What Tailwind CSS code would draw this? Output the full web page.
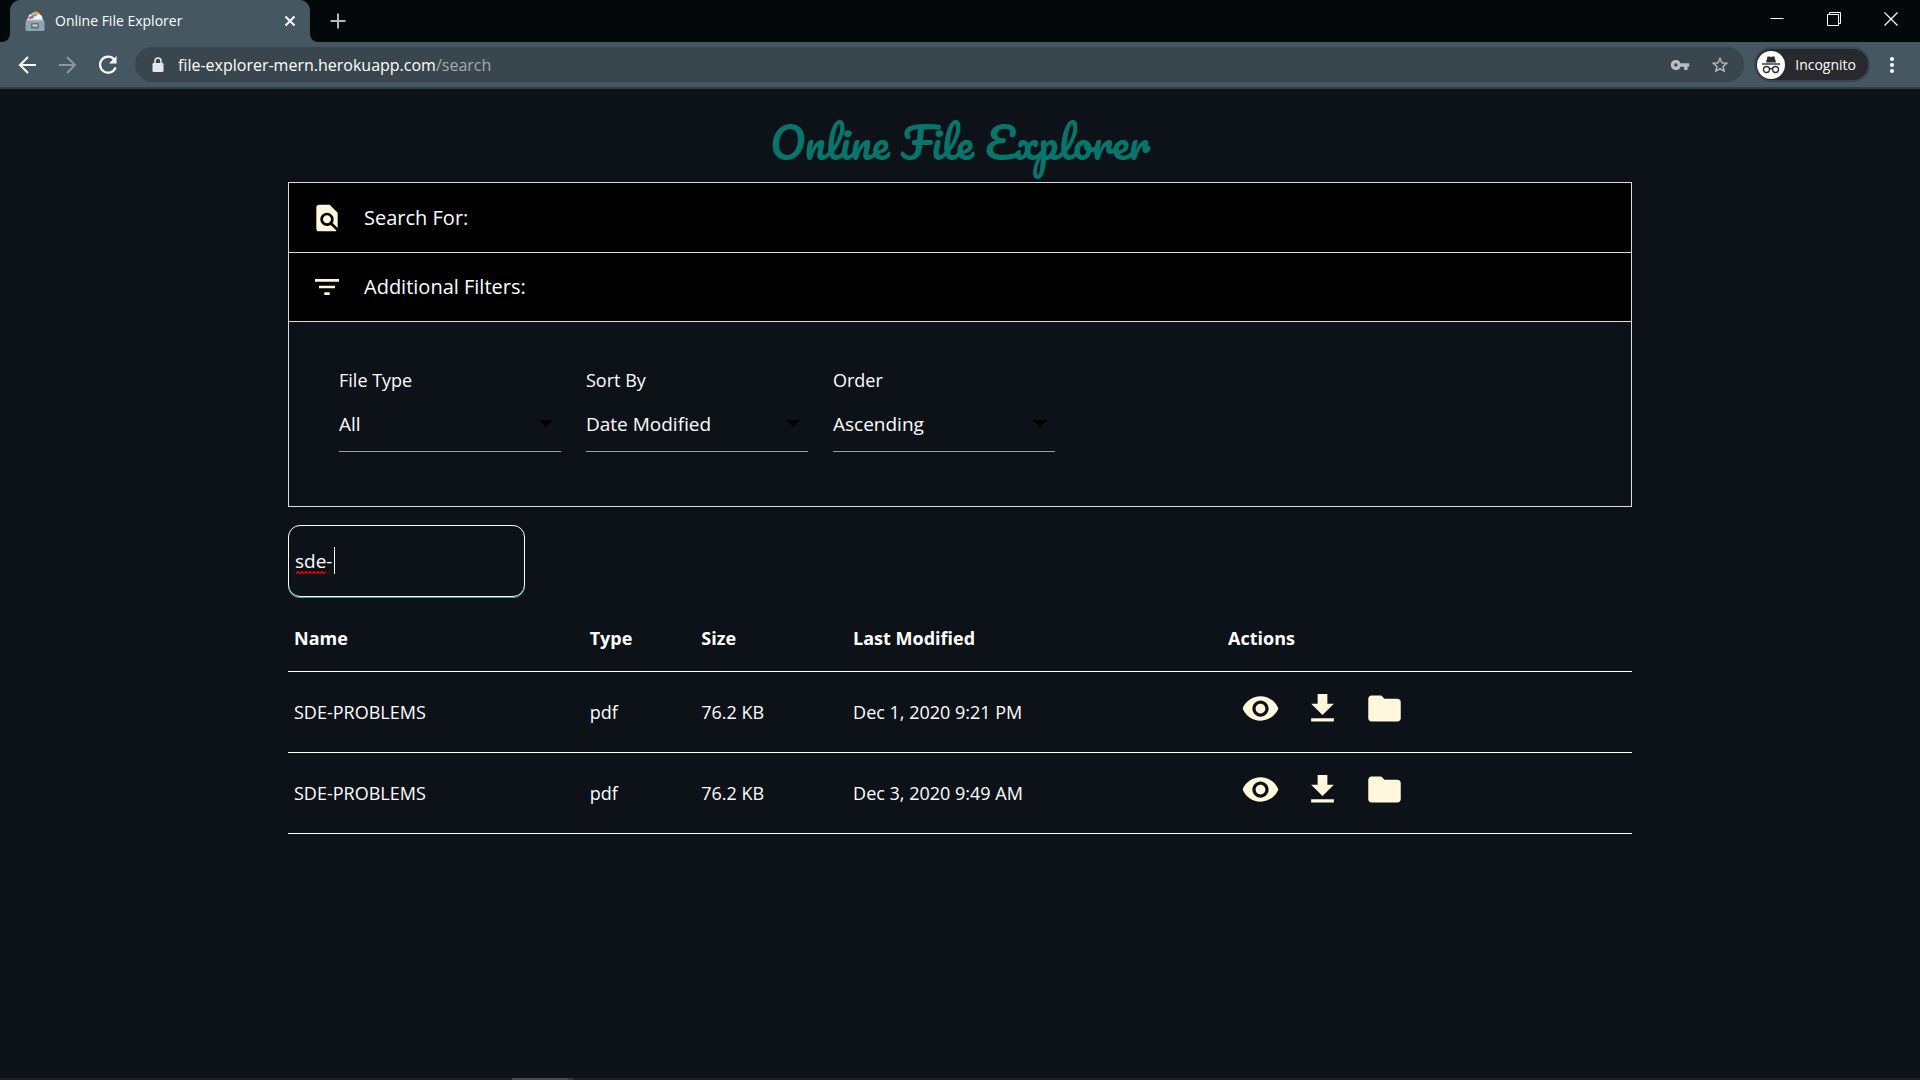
<!DOCTYPE html>
<html lang="en">
<head>
  <meta charset="UTF-8">
  <meta name="viewport" content="width=device-width, initial-scale=1">
  <title>Online File Explorer</title>
  <script src="https://cdn.jsdelivr.net/npm/@tailwindcss/browser@4"></script>
</head>
<body class="bg-[#0d1118] text-white min-h-screen flex flex-col font-['Segoe_UI','Open_Sans',sans-serif]">

  <!-- Tab strip -->
  <header>
    <div class="bg-[#04080a] h-[42px] flex items-center pl-[10px]">
      <div class="relative bg-[#455760] w-[300px] h-full rounded-t-[10px] flex items-center pl-[15px] pr-[14px]">
        <svg class="absolute -left-2 bottom-0 w-2 h-2" viewBox="0 0 8 8"><path fill="#455760" d="M8 0v8H0a8 8 0 0 0 8-8z"/></svg>
        <svg class="absolute -right-2 bottom-0 w-2 h-2" viewBox="0 0 8 8"><path fill="#455760" d="M0 0v8h8a8 8 0 0 1-8-8z"/></svg>
        <svg class="w-5 h-5 mr-[10px] shrink-0" viewBox="0 0 20 20">
          <path fill="#f4f7f9" d="M2 10 4 4l4-2h5l4 3 1 5z"/>
          <path fill="#f9a825" d="m8 1 4-.6 3 2-1 1.400-5-.8z"/>
          <path fill="#42a5f5" d="m6 3.500 5-.5 1 2-5 1z"/>
          <path fill="#e53950" d="m3.500 6 4-1 1.500 2-5 1z"/>
          <path fill="#cfd8dc" d="M2 8h16l1 3H1z"/>
          <rect x="0.500" y="9.500" width="19" height="10.500" rx="1.500" fill="#90a4ae"/>
          <rect x="6" y="12" width="8" height="5.500" rx="1.200" fill="#607580"/>
          <rect x="7.500" y="13.500" width="5" height="2" fill="#cfd8dc"/>
        </svg>
        <span class="text-sm flex-1">Online File Explorer</span>
        <button aria-label="Close tab">
          <svg class="w-3 h-3" viewBox="0 0 12 12" stroke="#fff" stroke-width="2"><path d="m1.500 1.500 9 9m0-9-9 9"/></svg>
        </button>
      </div>
      <button aria-label="New tab" class="ml-5">
        <svg class="w-4 h-4" viewBox="0 0 16 16" stroke="#b4b6b7" stroke-width="2"><path d="M8 .5v15M.5 8h15"/></svg>
      </button>
      <div class="ml-auto flex items-center gap-[43px] pr-[22px] pb-1">
        <button aria-label="Minimize"><svg class="w-[14px] h-[14px]" viewBox="0 0 14 14"><path d="M.5 6.500h13" stroke="#fff"/></svg></button>
        <button aria-label="Restore"><svg class="w-[14px] h-[14px]" viewBox="0 0 14 14" fill="none" stroke="#fff"><path d="M.5 2.500h11v11H.5zM2.500 2.500v-2h11v11h-2"/></svg></button>
        <button aria-label="Close"><svg class="w-[14px] h-[14px]" viewBox="0 0 14 14"><path d="m.5.5 13 13m0-13-13 13" stroke="#fff" stroke-width="1.200"/></svg></button>
      </div>
    </div>

    <!-- Toolbar -->
    <div class="bg-[#455760] h-[47px] border-b-2 border-[#323e44] flex items-center pl-4">
      <div class="flex gap-4 mr-[15px]">
        <button aria-label="Back"><svg class="w-6 h-6" viewBox="0 0 24 24" fill="none" stroke="#fff" stroke-width="2"><path d="M20 12H4.500M12 4l-8 8 8 8"/></svg></button>
        <button aria-label="Forward"><svg class="w-6 h-6" viewBox="0 0 24 24" fill="none" stroke="#8c979c" stroke-width="2"><path d="M3 12h15.500M11 4l8 8-8 8"/></svg></button>
        <button aria-label="Reload"><svg class="w-6 h-6" viewBox="0 0 24 24"><path fill="none" stroke="#fff" stroke-width="2.200" d="M18.200 6.500A8 8 0 1 0 19.600 14.500"/><path fill="#fff" d="M20.500 3v7.500H13z"/></svg></button>
      </div>
      <div class="bg-[#39464d] rounded-full h-[35px] flex-1 flex items-center pl-[17px] pr-[14px]">
        <svg class="w-3 h-4 shrink-0" viewBox="0 0 12 16"><rect x=".5" y="6" width="11" height="9" rx="1.200" fill="#e4e6e7"/><path fill="none" stroke="#e4e6e7" stroke-width="1.600" d="M3 6.500V4a3 3 0 0 1 6 0v2.500"/></svg>
        <span class="ml-[14px] flex-1 text-base">file-explorer-mern.herokuapp.com<span class="text-[#a3abaf]">/search</span></span>
        <svg class="w-5 h-5 mr-5" viewBox="0 0 24 24"><path fill="#bdbdbf" d="M12.650 10A6 6 0 0 0 1 12a6 6 0 0 0 11.650 2H17v4h4v-4h2v-4zM7 14a2 2 0 1 1 0-4 2 2 0 0 1 0 4z"/></svg>
        <svg class="w-5 h-5" viewBox="0 0 24 24"><path fill="#bdbdbf" d="m22 9.240-7.190-.62L12 2 9.190 8.630 2 9.240l5.460 4.730L5.820 21 12 17.270 18.180 21l-1.630-7.030zM12 15.400l-3.760 2.270 1-4.280-3.320-2.880 4.380-.38L12 6.100l1.710 4.040 4.380.38-3.320 2.880 1 4.280z"/></svg>
      </div>
      <button class="ml-[10px] bg-[#27292e] border-2 border-[#39464d] rounded-full h-[35px] flex items-center pl-px pr-3 text-sm">
        <svg class="w-7 h-7 mr-[10px]" viewBox="0 0 28 28">
          <circle cx="14" cy="14" r="14" fill="#fff"/>
          <path fill="#2b2d31" d="M10.500 5.500h2l1.500.5 1.500-.5h2l1.500 6H9z"/>
          <path stroke="#2b2d31" stroke-width="1.400" d="M5 13h18"/>
          <g fill="none" stroke="#2b2d31" stroke-width="1.300"><circle cx="9.500" cy="18.500" r="3"/><circle cx="18.500" cy="18.500" r="3"/><path d="M12.500 18q1.500-1 3 0M6 17.500h1m14 0h1"/></g>
        </svg>
        Incognito
      </button>
      <button aria-label="Menu" class="ml-[10px] mr-4">
        <svg class="w-6 h-6" viewBox="0 0 24 24" fill="#fff"><circle cx="12" cy="6" r="2"/><circle cx="12" cy="12" r="2"/><circle cx="12" cy="18" r="2"/></svg>
      </button>
    </div>
  </header>

  <main class="w-[70%] mx-auto pt-4">
    <h1 class="text-[#07756a] text-[43px] leading-[73px] mb-1 text-center font-['Pacifico',cursive]">Online File Explorer</h1>

    <!-- Search options -->
    <section class="border border-[#ddd]">
      <h2 class="bg-black h-[70px] border-b border-[#ddd] flex items-center px-5 text-xl">
        <span class="w-9 mr-[19px] flex justify-center">
          <svg class="w-8 h-8" viewBox="0 0 24 24" fill="#fff8dc"><path d="M20 19.590V8l-6-6H6c-1.100 0-1.990.9-1.990 2L4 20c0 1.100.89 2 1.990 2H18c.45 0 .85-.15 1.190-.4l-4.430-4.430c-.8.520-1.740.83-2.760.83-2.760 0-5-2.240-5-5s2.240-5 5-5 5 2.240 5 5c0 1.020-.31 1.960-.83 2.750L20 19.590zM9 13c0 1.660 1.340 3 3 3s3-1.340 3-3-1.340-3-3-3-3 1.340-3 3z"/></svg>
        </span>
        Search For:
      </h2>
      <h2 class="bg-black h-[69px] border-b border-[#ddd] flex items-center px-5 text-xl">
        <span class="w-9 mr-[19px] flex justify-center">
          <svg class="w-8 h-8" viewBox="0 0 24 24" fill="#fff8dc"><path d="M10 18h4v-2h-4v2zM3 6v2h18V6H3zm3 7h12v-2H6v2z"/></svg>
        </span>
        Additional Filters:
      </h2>
      <div class="flex gap-[25px] px-[50px] pt-11 pb-[54px]">
        <div class="w-[222px]">
          <label for="fileType" class="block text-lg leading-7">File Type</label>
          <div class="relative mt-1">
            <select id="fileType" class="appearance-none w-full h-[54px] bg-transparent border-b border-[#9e9e9e] text-[19px] outline-none">
              <option>All</option>
            </select>
            <svg class="absolute right-2 top-[22px] w-[14px] h-[7px] pointer-events-none" viewBox="0 0 14 7"><path d="M0 0h14L7 7z"/></svg>
          </div>
        </div>
        <div class="w-[222px]">
          <label for="sortBy" class="block text-lg leading-7">Sort By</label>
          <div class="relative mt-1">
            <select id="sortBy" class="appearance-none w-full h-[54px] bg-transparent border-b border-[#9e9e9e] text-[19px] outline-none">
              <option>Date Modified</option>
            </select>
            <svg class="absolute right-2 top-[22px] w-[14px] h-[7px] pointer-events-none" viewBox="0 0 14 7"><path d="M0 0h14L7 7z"/></svg>
          </div>
        </div>
        <div class="w-[222px]">
          <label for="order" class="block text-lg leading-7">Order</label>
          <div class="relative mt-1">
            <select id="order" class="appearance-none w-full h-[54px] bg-transparent border-b border-[#9e9e9e] text-[19px] outline-none">
              <option>Ascending</option>
            </select>
            <svg class="absolute right-2 top-[22px] w-[14px] h-[7px] pointer-events-none" viewBox="0 0 14 7"><path d="M0 0h14L7 7z"/></svg>
          </div>
        </div>
      </div>
    </section>

    <!-- Search box -->
    <div class="relative mt-[18px] w-[237px]">
      <input type="text" id="search" aria-label="Search" value="sde-" spellcheck="false"
        class="block w-full h-[72px] px-[6px] border border-white rounded-xl bg-transparent text-[19px] caret-transparent outline-none shadow-[0_1px_0_0_#26a69a]">
      <svg class="absolute left-2 top-[46px] w-[30px] h-[3px]" viewBox="0 0 30 3" fill="none" stroke="#e00" stroke-width="1.200"><path d="M0 2.500l2-2 2 2 2-2 2 2 2-2 2 2 2-2 2 2 2-2 2 2 2-2 2 2 2-2 2 2 2-2"/></svg>
      <span class="absolute left-[46px] top-[22px] w-px h-[27px] bg-white"></span>
    </div>

    <!-- Files -->
    <table class="w-full table-fixed mt-[9px] text-left text-lg">
      <thead>
        <tr class="h-[65px] border-b border-white">
          <th class="w-[22%] px-[6px]">Name</th>
          <th class="w-[8.3%] px-[6px]">Type</th>
          <th class="w-[11.3%] px-[6px]">Size</th>
          <th class="w-[27.9%] px-[6px]">Last Modified</th>
          <th class="px-[6px]">Actions</th>
        </tr>
      </thead>
      <tbody id="files"></tbody>
    </table>
  </main>

  <!-- Taskbar edge -->
  <footer class="mt-auto h-[2px] bg-[#1f1f22] flex">
    <div class="ml-[512px] w-14 bg-[#4a4a4d]"></div>
    <div class="w-[5px] bg-[#38383b]"></div>
  </footer>

  <script>
    const files = [
      { name: 'SDE-PROBLEMS', type: 'pdf', size: '76.2 KB', modified: 'Dec 1, 2020 9:21 PM' },
      { name: 'SDE-PROBLEMS', type: 'pdf', size: '76.2 KB', modified: 'Dec 3, 2020 9:49 AM' }
    ];

    const actions = [
      ['View', 'M12 4.500C7 4.500 2.730 7.610 1 12c1.730 4.390 6 7.500 11 7.500s9.270-3.110 11-7.500c-1.730-4.390-6-7.500-11-7.500zM12 17c-2.760 0-5-2.240-5-5s2.240-5 5-5 5 2.240 5 5-2.240 5-5 5zm0-8c-1.660 0-3 1.340-3 3s1.340 3 3 3 3-1.340 3-3-1.340-3-3-3z'],
      ['Download', 'M19 9h-4V3H9v6H5l7 7 7-7zM5 18v2h14v-2H5z'],
      ['Open folder', 'M10 4H4c-1.100 0-1.990.9-1.990 2L2 18c0 1.100.9 2 2 2h16c1.100 0 2-.9 2-2V8c0-1.100-.9-2-2-2h-8l-2-2z']
    ];

    const buttons = actions.map(([label, path]) => `
      <button aria-label="${label}"><svg class="w-[39px] h-[39px]" viewBox="0 0 24 24" fill="#fff8dc"><path d="${path}"/></svg></button>`).join('');

    document.getElementById('files').innerHTML = files.map(file => `
      <tr class="h-[81px] border-b border-white">
        <td class="px-[6px]">${file.name}</td>
        <td class="px-[6px]">${file.type}</td>
        <td class="px-[6px]">${file.size}</td>
        <td class="px-[6px]">${file.modified}</td>
        <td class="px-[6px]"><div class="flex gap-[23px] pl-[13px] pb-[6px]">${buttons}</div></td>
      </tr>`).join('');
  </script>
</body>
</html>
